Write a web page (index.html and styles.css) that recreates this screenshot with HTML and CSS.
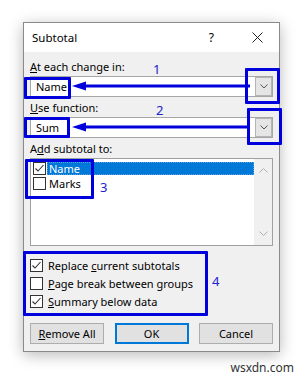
FILE: index.html
```html
<!DOCTYPE html>
<html lang="en">

<head>
    <meta charset="UTF-8">
    <title>Subtotal</title>
    <link rel="stylesheet" href="styles.css">
</head>

<body>
    <div class="page">
        <div class="dialog">
            <div class="titlebar">
                <span class="title">Subtotal</span>
                <span class="help">?</span>
                <svg class="close" width="11" height="11" viewBox="0 0 11 11">
                    <path d="M0.5 0.5 L10.5 10.5 M10.5 0.5 L0.5 10.5" stroke="#222" stroke-width="1" fill="none" />
                </svg>
            </div>

            <div class="content">
                <div class="label"><u>A</u>t each change in:</div>
                <div class="combo">
                    <span class="combo-text">Name</span>
                    <span class="drop">
                        <svg width="8" height="5" viewBox="0 0 8 5"><path d="M0.5 0.5 L4 4 L7.5 0.5" stroke="#555" fill="none" /></svg>
                    </span>
                </div>

                <div class="label"><u>U</u>se function:</div>
                <div class="combo">
                    <span class="combo-text">Sum</span>
                    <span class="drop">
                        <svg width="8" height="5" viewBox="0 0 8 5"><path d="M0.5 0.5 L4 4 L7.5 0.5" stroke="#555" fill="none" /></svg>
                    </span>
                </div>

                <div class="label">A<u>d</u>d subtotal to:</div>
                <div class="listbox">
                    <div class="items">
                        <div class="item">
                            <span class="cb">
                                <svg width="11" height="11" viewBox="0 0 11 11"><path d="M1.5 5.5 L4 8 L9.5 2" stroke="#333" stroke-width="1.1" fill="none" /></svg>
                            </span>
                            <span class="item-text selected">Name</span>
                        </div>
                        <div class="item">
                            <span class="cb"></span>
                            <span class="item-text">Marks</span>
                        </div>
                    </div>
                    <div class="scrollbar">
                        <svg width="9" height="5" viewBox="0 0 9 5"><path d="M0.5 4.5 L4.5 0.5 L8.5 4.5" stroke="#b0b0b0" fill="none" /></svg>
                        <svg width="9" height="5" viewBox="0 0 9 5"><path d="M0.5 0.5 L4.5 4.5 L8.5 0.5" stroke="#b0b0b0" fill="none" /></svg>
                    </div>
                </div>

                <div class="options">
                    <div class="option">
                        <span class="cb">
                            <svg width="11" height="11" viewBox="0 0 11 11"><path d="M1.5 5.5 L4 8 L9.5 2" stroke="#333" stroke-width="1.1" fill="none" /></svg>
                        </span>
                        <span>Replace <u>c</u>urrent subtotals</span>
                    </div>
                    <div class="option">
                        <span class="cb"></span>
                        <span><u>P</u>age break between groups</span>
                    </div>
                    <div class="option">
                        <span class="cb">
                            <svg width="11" height="11" viewBox="0 0 11 11"><path d="M1.5 5.5 L4 8 L9.5 2" stroke="#333" stroke-width="1.1" fill="none" /></svg>
                        </span>
                        <span><u>S</u>ummary below data</span>
                    </div>
                </div>

                <div class="buttons">
                    <button class="btn"><u>R</u>emove All</button>
                    <button class="btn btn-default">OK</button>
                    <button class="btn">Cancel</button>
                </div>
            </div>
        </div>

        <div class="watermark">wsxdn.com</div>

        <!-- annotations drawn on top of the screenshot -->
        <div class="mark mark-drop1"></div>
        <div class="mark mark-drop2"></div>
        <div class="mark mark-name"></div>
        <div class="mark mark-sum"></div>
        <div class="mark mark-list"></div>
        <div class="mark mark-options"></div>

        <svg class="arrow arrow-1" width="178" height="10" viewBox="0 0 178 10">
            <polygon points="0,5 14,0.5 14,9.5" fill="#0000dd" />
            <line x1="13" y1="5" x2="178" y2="5" stroke="#0000dd" stroke-width="3" />
        </svg>
        <svg class="arrow arrow-2" width="176" height="10" viewBox="0 0 176 10">
            <polygon points="0,5 14,0.5 14,9.5" fill="#0000dd" />
            <line x1="13" y1="5" x2="176" y2="5" stroke="#0000dd" stroke-width="3" />
        </svg>

        <span class="num num-1">1</span>
        <span class="num num-2">2</span>
        <span class="num num-3">3</span>
        <span class="num num-4">4</span>
    </div>
</body>

</html>
```

FILE: styles.css
```css
body {
    margin: 0;
    background-color: #fff;
    font-family: "Noto Sans", "Open Sans", sans-serif;
    font-size: 11px;
    color: #000;
}

.page {
    position: relative;
    width: 306px;
    height: 378px;
    overflow: hidden;
}

.dialog {
    margin: 22px 0 0 23px;
    width: 255px;
    border: 1px solid #8a8a8a;
    box-shadow: 0 3px 14px rgba(0, 0, 0, 0.28);
}

.titlebar {
    display: flex;
    align-items: center;
    height: 29px;
    background-color: #fff;
    padding-left: 8px;
}

.title {
    font-size: 11.5px;
    flex: 1;
}

.help {
    font-size: 12px;
    margin-right: 38px;
}

.close {
    margin-right: 16px;
}

.content {
    background-color: #f0f0f0;
    padding: 7px 6px 7px 6px;
}

.label {
    line-height: 15px;
    height: 15px;
}

u {
    text-decoration-thickness: 1px;
    text-underline-offset: 1px;
}

.combo {
    display: flex;
    align-items: center;
    height: 19px;
    margin-top: 2px;
    margin-bottom: 3px;
    background-color: #fff;
    border: 1px solid #a6a6a6;
}

.combo-text {
    flex: 1;
    padding-left: 5px;
}

.drop {
    display: flex;
    align-items: center;
    justify-content: center;
    width: 17px;
    height: 19px;
    background-color: #e5e5e5;
    border: 1px solid #b4b4b4;
    box-sizing: border-box;
}

.listbox {
    display: flex;
    height: 86px;
    margin-top: 2px;
    background-color: #fff;
    border: 1px solid #a0a0a0;
}

.items {
    flex: 1;
    padding: 2px 0 0 2px;
}

.item {
    display: flex;
    align-items: center;
    height: 15px;
}

.item-text {
    flex: 1;
    height: 13px;
    line-height: 13px;
    padding-left: 2px;
}

.item-text.selected {
    background-color: #0078d7;
    color: #fff;
    outline: 1px dotted #5aa0e0;
    outline-offset: -1px;
}

.cb {
    display: flex;
    align-items: center;
    justify-content: center;
    width: 13px;
    height: 13px;
    box-sizing: border-box;
    border: 1px solid #333;
    background-color: #fff;
    margin-right: 1px;
}

.scrollbar {
    display: flex;
    flex-direction: column;
    align-items: center;
    justify-content: space-between;
    width: 18px;
    padding: 9px 0 9px 0;
    box-sizing: border-box;
    background-color: #f0f0f0;
}

.options {
    margin-top: 10px;
}

.option {
    display: flex;
    align-items: center;
    height: 18px;
}

.option .cb {
    margin-right: 5px;
}

.buttons {
    display: flex;
    justify-content: space-between;
    margin-top: 13px;
}

.btn {
    width: 74px;
    height: 21px;
    padding: 0;
    font-family: inherit;
    font-size: 11px;
    color: #000;
    background-color: #e1e1e1;
    border: 1px solid #adadad;
}

.btn-default {
    border: 2px solid #0078d7;
}

.watermark {
    margin-top: 9px;
    margin-right: 12px;
    text-align: right;
    font-size: 12px;
    color: #333;
    line-height: 14px;
}

.mark {
    position: absolute;
    border: 3px solid #0000dd;
    border-radius: 1px;
}

.mark-drop1 {
    left: 245px;
    top: 68px;
    width: 29px;
    height: 30px;
}

.mark-drop2 {
    left: 247px;
    top: 108px;
    width: 29px;
    height: 31px;
}

.mark-name {
    left: 24px;
    top: 77px;
    width: 41px;
    height: 16px;
}

.mark-sum {
    left: 24px;
    top: 117px;
    width: 40px;
    height: 15px;
}

.mark-list {
    left: 25px;
    top: 159px;
    width: 63px;
    height: 34px;
}

.mark-options {
    left: 23px;
    top: 251px;
    width: 179px;
    height: 59px;
}

.arrow {
    position: absolute;
}

.arrow-1 {
    left: 72px;
    top: 81px;
}

.arrow-2 {
    left: 72px;
    top: 122px;
}

.num {
    position: absolute;
    color: #2020d0;
    font-size: 13px;
    line-height: 13px;
}

.num-1 {
    left: 153px;
    top: 63px;
}

.num-2 {
    left: 156px;
    top: 104px;
}

.num-3 {
    left: 100px;
    top: 181px;
}

.num-4 {
    left: 212px;
    top: 275px;
}
```
